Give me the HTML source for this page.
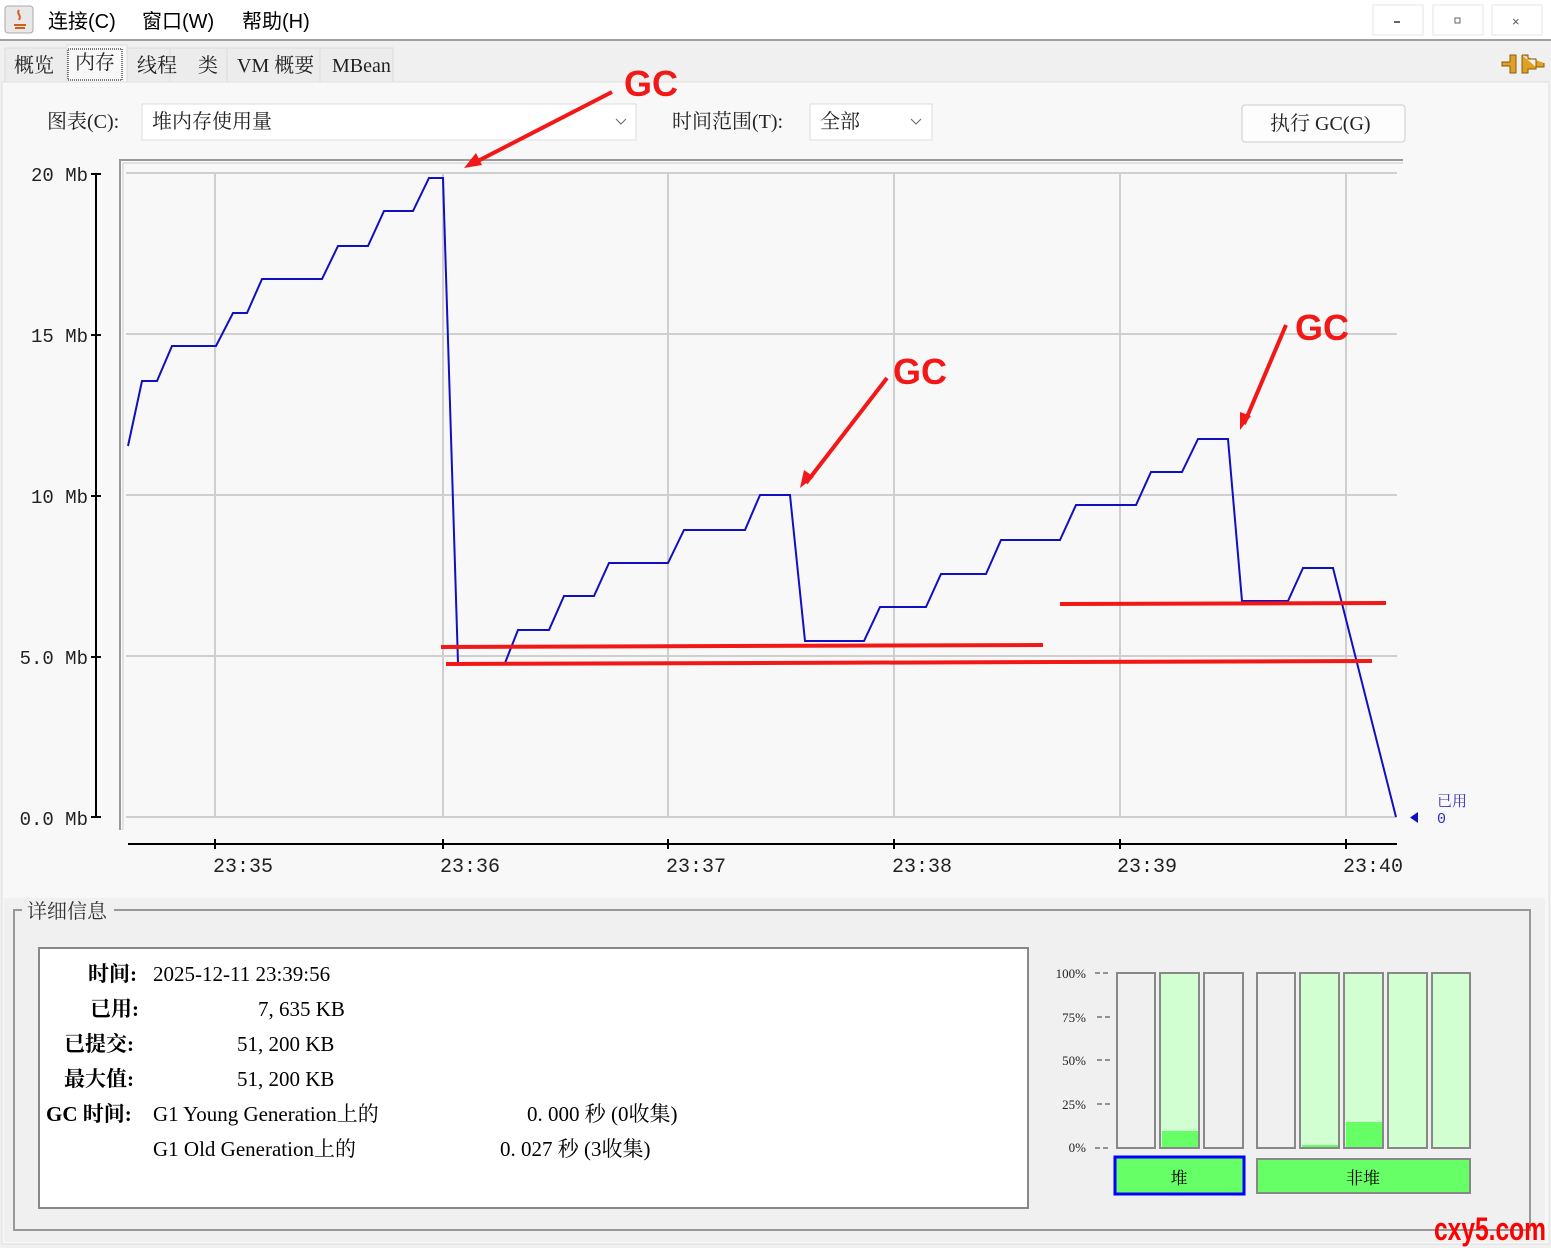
<!DOCTYPE html>
<html><head><meta charset="utf-8"><style>
html,body{margin:0;padding:0;background:#fff;width:1551px;height:1248px;overflow:hidden}
svg{display:block}
.s{font-family:"Liberation Sans","Noto Sans CJK SC",sans-serif}
.r{font-family:"Liberation Serif","Noto Serif CJK SC",serif}
.m{font-family:"Liberation Mono","Noto Serif CJK SC",monospace}
</style></head><body>
<svg width="1551" height="1248" viewBox="0 0 1551 1248" xmlns="http://www.w3.org/2000/svg">
<rect width="1551" height="1248" fill="#f0f0f0"/>
<!-- title/menu bar -->
<rect x="0" y="0" width="1551" height="39" fill="#fff"/>
<rect x="0" y="39" width="1551" height="2" fill="#a0a0a0"/>
<rect x="5" y="6" width="28" height="27" rx="3" fill="#e8e8e8" stroke="#aaa"/>
<path d="M14 25h12M15 28h10M19 10c-3 4 3 5 0 10" stroke="#d06020" stroke-width="2" fill="none"/>
<text x="48" y="28" font-size="20" class="s" fill="#000">连接(C)</text>
<text x="142" y="28" font-size="20" class="s" fill="#000">窗口(W)</text>
<text x="242" y="28" font-size="20" class="s" fill="#000">帮助(H)</text>
<rect x="1373" y="5" width="50" height="30" fill="#fff" stroke="#e6e6e6"/>
<rect x="1433" y="5" width="50" height="30" fill="#fff" stroke="#e6e6e6"/>
<rect x="1492" y="5" width="50" height="30" fill="#fff" stroke="#e6e6e6"/>
<rect x="1394" y="21" width="6" height="2" fill="#666"/>
<rect x="1455" y="18" width="5" height="5" fill="none" stroke="#666"/>
<text x="1512" y="26" font-size="13" class="s" fill="#555">×</text>
<!-- tabs -->
<rect x="5" y="48" width="62" height="34" fill="#ececec" stroke="#ddd"/>
<rect x="67" y="45" width="60" height="38" fill="#f8f8f8" stroke="#ddd"/>
<rect x="68" y="49" width="54" height="31" fill="none" stroke="#000" stroke-dasharray="1,1"/>
<rect x="127" y="48" width="43" height="34" fill="#ececec" stroke="#ddd"/>
<rect x="170" y="48" width="57" height="34" fill="#ececec" stroke="#ddd"/>
<rect x="227" y="48" width="93" height="34" fill="#ececec" stroke="#ddd"/>
<rect x="320" y="48" width="73" height="34" fill="#ececec" stroke="#ddd"/>
<text x="14" y="72" font-size="20" class="r" fill="#222">概览</text>
<text x="75" y="69" font-size="20" class="r" fill="#222">内存</text>
<text x="137" y="72" font-size="20" class="r" fill="#222">线程</text>
<text x="198" y="72" font-size="20" class="r" fill="#222">类</text>
<text x="237" y="72" font-size="20" class="r" fill="#222">VM 概要</text>
<text x="332" y="72" font-size="20" class="r" fill="#222">MBean</text>
<path d="M1502 62h8v-7h6v18h-6v-7h-8z" fill="#e0a020" stroke="#8a5a10"/>
<path d="M1522 55h6v4h8v8h8v-4 M1522 55v18h6v-4h8v-2" fill="#e0a020" stroke="#8a5a10"/>
<!-- content -->
<rect x="2" y="82" width="1547" height="1162" fill="#f8f8f8" stroke="#e0e0e0"/>
<text x="47" y="128" font-size="20" class="r" fill="#222">图表(C):</text>
<rect x="142" y="104" width="494" height="36" fill="#fff" stroke="#ddd"/>
<text x="152" y="128" font-size="20" class="r" fill="#222">堆内存使用量</text>
<path d="M616 119l5 5 5-5" stroke="#666" fill="none"/>
<text x="672" y="128" font-size="20" class="r" fill="#222">时间范围(T):</text>
<rect x="810" y="104" width="122" height="36" fill="#fff" stroke="#ddd"/>
<text x="820" y="128" font-size="20" class="r" fill="#222">全部</text>
<path d="M911 119l5 5 5-5" stroke="#666" fill="none"/>
<rect x="1242" y="105" width="163" height="37" rx="3" fill="#fdfdfd" stroke="#ccc"/>
<text x="1270" y="130" font-size="20" class="r" fill="#222">执行 GC(G)</text>
<!-- plot -->
<rect x="119" y="159" width="1284" height="672" fill="#f8f8f8"/>
<path d="M120 830V160H1403" stroke="#999" stroke-width="2" fill="none"/>
<path d="M123 830V163H1403" stroke="#ccc" stroke-width="1" fill="none"/>
<g stroke="#cfcfcf" stroke-width="2">
<path d="M126 173H1397M126 334H1397M126 495H1397M126 656H1397M126 817H1397"/>
<path d="M215 173V817M443 173V817M668 173V817M894 173V817M1120 173V817M1346 173V817"/>
</g>
<path d="M96 173V817M91 174h10M91 335h10M91 496h10M91 657h10M91 817h10" stroke="#000" stroke-width="2"/>
<g font-size="19" class="m" fill="#222" text-anchor="end">
<text x="88" y="181">20 Mb</text><text x="88" y="342">15 Mb</text><text x="88" y="503">10 Mb</text><text x="88" y="664">5.0 Mb</text><text x="88" y="825">0.0 Mb</text>
</g>
<path d="M128 844H1397M215 839v10M443 839v10M668 839v10M894 839v10M1120 839v10M1346 839v10" stroke="#000" stroke-width="2"/>
<g font-size="20" class="m" fill="#222" text-anchor="middle">
<text x="243" y="872">23:35</text><text x="470" y="872">23:36</text><text x="696" y="872">23:37</text><text x="922" y="872">23:38</text><text x="1147" y="872">23:39</text><text x="1373" y="872">23:40</text>
</g>
<polyline fill="none" stroke="#1010c0" stroke-width="2" points="128,446 142,381 157,381 172,346 216,346 233,313 247,313 262,279 322,279 338,246 368,246 384,211 413,211 429,178 443,178 458,663 505,663 518,630 549,630 564,596 594,596 609,563 668,563 684,530 745,530 760,495 790,495 805,641 864,641 880,607 926,607 941,574 986,574 1001,540 1060,540 1076,505 1136,505 1151,472 1182,472 1198,439 1228,439 1242,601 1288,601 1303,568 1333,568 1396,817"/>
<path d="M1418 812v11l-8-5.5z" fill="#1010c0"/>
<text x="1437" y="806" font-size="15" class="r" fill="#3030c0">已用</text>
<text x="1437" y="823" font-size="15" class="m" fill="#3030c0">0</text>
<!-- annotations -->
<g stroke="#f21818" stroke-width="4" fill="none">
<path d="M441 647L1043 645M446 664L1372 661M1060 604L1386 603"/>
<path d="M612 92L472 164M887 378L806 483M1286 325L1244 424"/>
</g>
<g fill="#f21818">
<path d="M464 168l18-3-6-12z"/>
<path d="M800 488l4-18 10 7z"/>
<path d="M1240 430l0-18 11 4z"/>
</g>
<g font-size="36" font-weight="bold" class="s" fill="#f21818" text-anchor="middle">
<text x="651" y="96">GC</text><text x="920" y="384">GC</text><text x="1322" y="340">GC</text>
</g>
<!-- details -->
<rect x="4" y="898" width="1541" height="344" fill="#f0f0f0"/>
<rect x="14" y="910" width="1516" height="320" fill="none" stroke="#999" stroke-width="2"/>
<rect x="22" y="900" width="92" height="20" fill="#f0f0f0"/>
<text x="27" y="918" font-size="20" class="r" fill="#333">详细信息</text>
<rect x="39" y="948" width="989" height="260" fill="#fff" stroke="#888" stroke-width="2"/>
<g font-size="21" class="r" fill="#000">
<text x="88" y="981" font-weight="bold">时间:</text><text x="153" y="981">2025-12-11 23:39:56</text>
<text x="90" y="1016" font-weight="bold">已用:</text><text x="258" y="1016">7, 635 KB</text>
<text x="64" y="1051" font-weight="bold">已提交:</text><text x="237" y="1051">51, 200 KB</text>
<text x="64" y="1086" font-weight="bold">最大值:</text><text x="237" y="1086">51, 200 KB</text>
<text x="46" y="1121" font-weight="bold">GC 时间:</text><text x="153" y="1121">G1 Young Generation上的</text><text x="527" y="1121">0. 000 秒 (0收集)</text>
<text x="153" y="1156">G1 Old Generation上的</text><text x="500" y="1156">0. 027 秒 (3收集)</text>
</g>
<!-- bars -->
<g font-size="13" class="r" fill="#222" text-anchor="end">
<text x="1086" y="978">100%</text><text x="1086" y="1022">75%</text><text x="1086" y="1065">50%</text><text x="1086" y="1109">25%</text><text x="1086" y="1152">0%</text>
</g>
<path d="M1095 973h14M1097 1017h14M1097 1060h14M1097 1104h14M1095 1148h14" stroke="#333" stroke-dasharray="5,3"/>
<g stroke="#888" stroke-width="2">
<rect x="1117" y="973" width="38" height="175" fill="#f0f0f0"/>
<rect x="1160" y="973" width="39" height="175" fill="#d2ffd2"/>
<rect x="1204" y="973" width="39" height="175" fill="#f0f0f0"/>
<rect x="1257" y="973" width="38" height="175" fill="#f0f0f0"/>
<rect x="1300" y="973" width="39" height="175" fill="#d2ffd2"/>
<rect x="1344" y="973" width="39" height="175" fill="#d2ffd2"/>
<rect x="1388" y="973" width="39" height="175" fill="#d2ffd2"/>
<rect x="1432" y="973" width="38" height="175" fill="#d2ffd2"/>
</g>
<rect x="1162" y="1131" width="36" height="16" fill="#66ff66"/>
<rect x="1302" y="1145" width="36" height="2" fill="#66ff66"/>
<rect x="1346" y="1122" width="36" height="25" fill="#66ff66"/>
<rect x="1115" y="1157" width="129" height="37" fill="#66ff66" stroke="#0000ff" stroke-width="3"/>
<rect x="1257" y="1159" width="213" height="34" fill="#66ff66" stroke="#888" stroke-width="2"/>
<text x="1179" y="1184" font-size="17" class="r" fill="#000" text-anchor="middle">堆</text>
<text x="1363" y="1184" font-size="17" class="r" fill="#000" text-anchor="middle">非堆</text>
<text x="1490" y="1240" font-size="32" font-weight="bold" class="s" fill="#f00" text-anchor="middle" textLength="112" lengthAdjust="spacingAndGlyphs">cxy5.com</text>
</svg>
</body></html>
